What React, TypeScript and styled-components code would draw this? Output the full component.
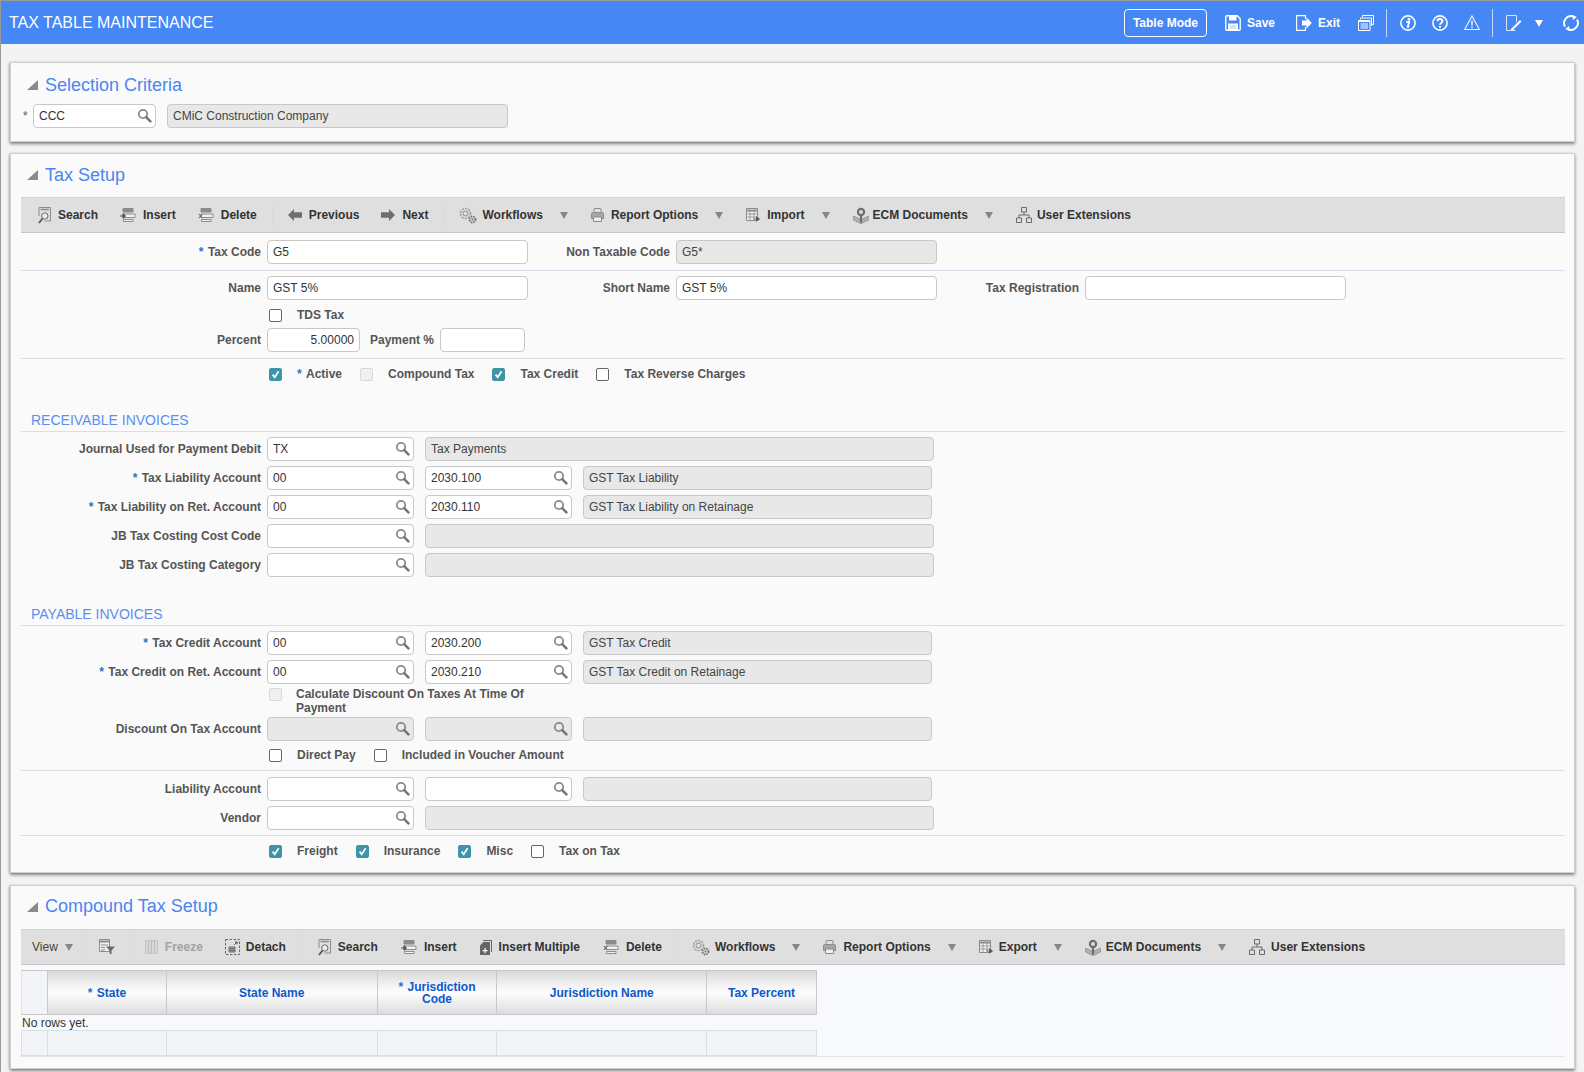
import React from 'react'
import styled, { createGlobalStyle } from 'styled-components'

const GlobalStyle = createGlobalStyle`
  html, body {
    margin: 0;
    padding: 0;
    height: 100%;
    background: #f1f3f5;
    font-family: "Liberation Sans", Arial, sans-serif;
    font-size: 12px;
    overflow: hidden;
  }
  * { box-sizing: border-box; }
`

const Page = styled.div`
  height: 1072px;
  border-left: 1px solid #9a9a9a;
  border-top: 1px solid #9a9a9a;
`

/* top bar */
const TopBar = styled.header`
  height: 43px;
  background: #4487f5;
  color: #fff;
  display: flex;
  align-items: center;
  padding-left: 8px;
`
const PageTitle = styled.h1`
  margin: 0;
  font-size: 16px;
  font-weight: 400;
  flex: 1;
`
const ModeButton = styled.button`
  width: 83px;
  height: 28px;
  border: 1px solid #fff;
  border-radius: 4px;
  background: transparent;
  color: #fff;
  font: bold 12px "Liberation Sans", Arial, sans-serif;
  padding: 0;
  margin-right: 18px;
`
const TopAction = styled.span<{ $mr?: number }>`
  display: flex;
  align-items: center;
  gap: 6px;
  font-weight: 700;
  font-size: 12px;
  margin-right: ${(p) => p.$mr ?? 16}px;
`
const TopSep = styled.span`
  width: 1px;
  height: 28px;
  background: #c6d9fb;
  margin: 0 13px 0 12px;
`

/* panels */
const Panel = styled.section<{ $mt: number; $pb?: number }>`
  margin: ${(p) => p.$mt}px 9px 0 9px;
  padding: 0 9px ${(p) => p.$pb ?? 11}px 10px;
  background: #fafafa;
  border: 1px solid #d0d0d0;
  box-shadow: 0 2px 3px rgba(0, 0, 0, 0.45), -1px 0 2px rgba(0, 0, 0, 0.12);
`
const PanelHead = styled.div<{ $h: number; $pb?: number }>`
  height: ${(p) => p.$h}px;
  display: flex;
  align-items: center;
  gap: 7px;
  padding: 0 0 ${(p) => p.$pb ?? 0}px 6px;
`
const Collapse = styled.span`
  width: 0;
  height: 0;
  border-style: solid;
  border-width: 0 0 10px 11px;
  border-color: transparent transparent #8a8a8a transparent;
`
const PanelTitle = styled.h2`
  margin: 0;
  font-size: 18px;
  font-weight: 400;
  color: #4a86f2;
`

/* toolbars */
const Toolbar = styled.div<{ $pl: number }>`
  height: 36px;
  display: flex;
  align-items: center;
  padding-left: ${(p) => p.$pl}px;
  background: #dfdfdf;
  border-top: 1px solid #cfd3d6;
  border-bottom: 1px solid #c6c6c6;
`
const ToolGroup = styled.div<{ $gap?: number }>`
  display: flex;
  align-items: center;
  gap: ${(p) => p.$gap ?? 22}px;
`
const ToolItem = styled.span<{ $off?: boolean }>`
  display: flex;
  align-items: center;
  font-weight: 700;
  white-space: nowrap;
  color: ${(p) => (p.$off ? '#a3a3a3' : '#333')};
`
const IconSlot = styled.span<{ $gap: number }>`
  display: flex;
  margin-right: ${(p) => p.$gap}px;
`
const ToolSep = styled.span<{ $mr?: number }>`
  width: 1px;
  height: 28px;
  background: #d6dde2;
  margin: 0 ${(p) => p.$mr ?? 15}px 0 15px;
`
const ViewSep = styled(ToolSep)`
  margin: 0 12px 0 13px;
`
const MenuCaret = styled.span<{ $ml?: number; $mr?: number }>`
  width: 0;
  height: 0;
  border-style: solid;
  border-width: 7px 4.5px 0 4.5px;
  border-color: #868686 transparent transparent transparent;
  margin-left: ${(p) => p.$ml ?? 17}px;
  margin-right: ${(p) => p.$mr ?? 1}px;
`
const ViewText = styled.span`
  color: #444;
`
const TopCaret = styled.span`
  width: 0;
  height: 0;
  border-style: solid;
  border-width: 7px 4.5px 0 4.5px;
  border-color: #fff transparent transparent transparent;
  margin: 2px 20px 0 0;
`

/* form */
const Row = styled.div<{ $mt?: number }>`
  display: flex;
  align-items: center;
  gap: 6px;
  min-height: 24px;
  margin-top: ${(p) => p.$mt ?? 5}px;
`
const FieldGroup = styled.div`
  display: flex;
  gap: 11px;
`
const Label = styled.label<{ $w: number }>`
  width: ${(p) => p.$w}px;
  text-align: right;
  font-weight: 700;
  color: #555;
  white-space: nowrap;
`
const Star = styled.span`
  color: #2c6fd4;
  margin-right: 1px;
`
const CriteriaRow = styled.div`
  display: flex;
  align-items: center;
  margin-top: -3px;
  padding-left: 2px;
`
const CriteriaStar = styled.span`
  color: #555;
  width: 10px;
`
const TextBox = styled.input<{ $w: number; $right?: boolean }>`
  width: ${(p) => p.$w}px;
  height: 24px;
  padding: 0 5px;
  border: 1px solid #c8c8c8;
  border-radius: 4px;
  background: #fff;
  color: #333;
  font: 12px "Liberation Sans", Arial, sans-serif;
  text-align: ${(p) => (p.$right ? 'right' : 'left')};
  outline: none;
`
const ReadBox = styled(TextBox)`
  background: #e8e8e8;
  color: #444;
`
const LovBox = styled.div<{ $w: number; $off?: boolean }>`
  width: ${(p) => p.$w}px;
  height: 24px;
  display: flex;
  align-items: center;
  padding: 0 3px 0 5px;
  border: 1px solid #c8c8c8;
  border-radius: 4px;
  background: ${(p) => (p.$off ? '#e8e8e8' : '#fff')};
  svg {
    margin-bottom: 1px;
  }
`
const LovInput = styled.input`
  flex: 1;
  min-width: 0;
  height: 20px;
  padding: 0;
  border: 0;
  background: transparent;
  color: #333;
  font: 12px "Liberation Sans", Arial, sans-serif;
  outline: none;
`
const Divider = styled.hr<{ $mt?: number }>`
  height: 1px;
  margin: ${(p) => p.$mt ?? 6}px 0 0;
  border: 0;
  background: #d6e0ea;
`
const CheckRow = styled.div<{ $mt?: number }>`
  display: flex;
  align-items: center;
  height: 20px;
  padding-left: 248px;
  margin-top: ${(p) => p.$mt ?? 5}px;
`
const CheckItem = styled.span`
  display: flex;
  align-items: center;
  gap: 15px;
  margin-right: 18px;
  font-weight: 700;
  color: #555;
  white-space: nowrap;
`
const Box = styled.span<{ $on?: boolean; $off?: boolean }>`
  width: 13px;
  height: 13px;
  flex: none;
  display: flex;
  border-radius: 2px;
  border: 1px solid ${(p) => (p.$on ? '#3d95a8' : p.$off ? '#d8d8d8' : '#666')};
  background: ${(p) => (p.$on ? '#3d95a8' : p.$off ? '#f0f0f0' : '#fff')};
`
const WrapCheck = styled.div`
  display: flex;
  gap: 14px;
  align-items: flex-start;
  padding-left: 248px;
  margin-top: 3px;
  font-weight: 700;
  color: #555;
  line-height: 14px;
`
const WrapText = styled.span`
  width: 240px;
`
const WrapBox = styled(Box)`
  margin-top: 1px;
`
const SubHead = styled.h3<{ $mt: number }>`
  height: 21px;
  margin: ${(p) => p.$mt}px 0 0;
  padding: 1px 0 0 10px;
  font-size: 14px;
  line-height: 16px;
  font-weight: 400;
  color: #5a8ff0;
  border-bottom: 1px solid #dcdfe2;
`

/* table */
const TableWrap = styled.div`
  height: 92px;
  padding-top: 5px;
  background: #f7f9fc;
  border-bottom: 1px solid #dde4ea;
`
const HeadRow = styled.div`
  display: flex;
  width: 796px;
  height: 45px;
  border: 1px solid #c9c9c9;
  border-width: 1px 1px 1px 0;
`
const HeadCell = styled.div<{ $w: number }>`
  width: ${(p) => p.$w}px;
  display: flex;
  align-items: center;
  justify-content: center;
  text-align: center;
  line-height: 12px;
  font-weight: 700;
  color: #0d57cf;
  border-left: 1px solid #c9c9c9;
  background: linear-gradient(#d9d9d9, #fbfbfb 45%, #fbfbfb 55%, #dcdcdc);
`
const HeadBlank = styled.div`
  width: 26px;
  background: #f2f4f8;
  border-left: 1px solid #dfe4e8;
`
const NoRows = styled.div`
  height: 15px;
  line-height: 16px;
  padding-left: 1px;
  color: #333;
`
const FootRow = styled.div`
  display: flex;
  width: 796px;
  height: 26px;
  background: #f2f4f8;
  border: 1px solid #d6e0ea;
  border-width: 1px 1px 1px 0;
`
const FootCell = styled.div<{ $w: number }>`
  width: ${(p) => p.$w}px;
  border-left: 1px solid #d6e0ea;
`

/* icons */
const G = '#6a6a6a'
const L = '#8c8c8c'
const WHITE = '#fff'

const LovIcon = () => (
  <svg width="15" height="15" viewBox="0 0 15 15" fill="none">
    <circle cx="6" cy="6" r="4.2" stroke="#8a8a8a" strokeWidth="1.8" />
    <path d="M9.2 9.2 13.4 13.4" stroke="#777" strokeWidth="2.6" strokeLinecap="round" />
  </svg>
)
const Tick = () => (
  <svg width="11" height="11" viewBox="0 0 11 11" fill="none">
    <path d="M2.6 5.6 4.7 8.2 8.6 2.2" stroke="#fff" strokeWidth="1.7" />
  </svg>
)

const SearchIcon = () => (
  <svg width="13" height="17" viewBox="0 0 13 17" fill="none">
    <path d="M1 .5h11.500v13.500H6.500M1 9V.5" stroke={L} />
    <path d="M2.500 2.500h8.500" stroke={L} strokeWidth="1.600" />
    <circle cx="6.800" cy="9" r="3.200" stroke={G} fill="#e8e8e8" />
    <path d="M4.500 11.500 1 16" stroke="#555" strokeWidth="1.800" />
  </svg>
)
const InsertIcon = ({ mark }: { mark: 'in' | 'x' }) => (
  <svg width="16" height="14" viewBox="0 0 16 14" fill="none">
    <path d="M3 .5h10v3.500H3z" fill="#8a8a8a" stroke={L} />
    <path d="M3 6h12v3.500H3z" stroke={L} fill="#f2f2f2" />
    <path d="M3.500 11.500h9.500v2H3.500z" stroke={L} fill="#f2f2f2" />
    {mark === 'in' ? (
      <path d="M0 8h4M3 5.600 5.600 8 3 10.400z" stroke="#555" fill="#555" />
    ) : (
      <path d="M.8 6 4.400 10M4.400 6 .8 10" stroke="#555" />
    )}
  </svg>
)
const ArrowLeftIcon = () => (
  <svg width="14" height="12" viewBox="0 0 14 12">
    <path d="M0 6 6 0v3.200h8v5.600H6V12z" fill="#6e6e6e" />
  </svg>
)
const ArrowRightIcon = () => (
  <svg width="14" height="12" viewBox="0 0 14 12">
    <path d="M14 6 8 0v3.200H0v5.600h8V12z" fill="#6e6e6e" />
  </svg>
)
const GearsIcon = () => (
  <svg width="18" height="17" viewBox="0 0 18 17" fill="none">
    <circle cx="6.500" cy="6.500" r="5" stroke="#a2a2a2" strokeWidth="1.600" strokeDasharray="2.200 1" />
    <circle cx="6.500" cy="6.500" r="2.500" stroke="#8c8c8c" />
    <circle cx="13.500" cy="12.500" r="3" stroke="#707070" strokeWidth="1.800" strokeDasharray="1.500 .9" />
    <circle cx="13.500" cy="12.500" r="1" fill="#707070" />
  </svg>
)
const PrinterIcon = () => (
  <svg width="13" height="14" viewBox="0 0 13 14" fill="none">
    <path d="M3 4.500V1a.5.5 0 0 1 .5-.5h6a.5.5 0 0 1 .5.5v3.500" stroke={L} />
    <path d="M.5 5.500a1 1 0 0 1 1-1h10a1 1 0 0 1 1 1V10.500H.5z" fill="#a6a6a6" stroke={L} />
    <path d="M2.500 9h8v4.500h-8z" fill="#eee" stroke={L} />
  </svg>
)
const SheetIcon = () => (
  <svg width="14" height="14" viewBox="0 0 14 14" fill="none">
    <path d="M.5.5h11v12H.5z" fill="#f2f2f2" stroke={L} />
    <path d="M.5 2.500h11" stroke={L} strokeWidth="2" />
    <path d="M.5 6h11M.5 9h11M4 3v9.500M8 3v9.500" stroke={L} strokeWidth=".8" />
    <path d="M7.500 11h4.500M10.500 8.800 13.500 11l-3 2.200z" stroke="#555" fill="#555" strokeWidth=".8" />
  </svg>
)
const EcmIcon = () => (
  <svg width="16" height="17" viewBox="0 0 16 17" fill="none">
    <path d="M.5 9 8 12.500 15.500 9v4L8 16.800.5 13z" fill="#b0b0b0" stroke={L} strokeWidth=".7" />
    <circle cx="8" cy="5" r="4.200" fill="#6e6e6e" />
    <circle cx="8" cy="5" r="2" fill="#dcdcdc" />
    <path d="M8 9v6.500" stroke="#6e6e6e" strokeWidth="2.200" />
  </svg>
)
const TreeIcon = () => (
  <svg width="16" height="16" viewBox="0 0 16 16" fill="none">
    <path d="M5.500.5h5v4.500h-5zM.5 11h5v4.500h-5zM10.500 11h5v4.500h-5z" stroke={G} />
    <path d="M8 5v3M3 11V8h10v3" stroke={G} />
  </svg>
)
const FilterIcon = () => (
  <svg width="16" height="16" viewBox="0 0 16 16" fill="none">
    <path d="M.5.5h10v12H.5z" stroke={L} fill="#f2f2f2" />
    <path d="M.5 2.500h10" stroke={L} strokeWidth="2" />
    <path d="M2 6h7M2 8.500h4M2 11h4" stroke={L} />
    <path d="M7 7.500h9l-3.500 4v4l-2-1v-3z" fill="#6a6a6a" />
  </svg>
)
const FreezeIcon = () => (
  <svg width="13" height="14" viewBox="0 0 13 14" fill="none">
    <path d="M.5.5h12v13H.5z" fill="#d8d8d8" stroke="#c4c4c4" />
    <path d="M3.500 1v12M6.500 1v12M9.500 1v12" stroke="#bcbcbc" />
  </svg>
)
const DetachIcon = () => (
  <svg width="15" height="16" viewBox="0 0 15 16" fill="none">
    <path d="M.5.500h14v15H.5z" stroke={G} strokeDasharray="2.500 1.500" />
    <path d="M4 8h6v5H4zM4 9.700h6M4 11.400h6M6 8v5M8 8v5" stroke="#555" strokeWidth=".8" />
    <path d="M9 6l3-3M10 3h2.200v2.200" stroke="#555" />
  </svg>
)
const MultiIcon = () => (
  <svg width="12" height="15" viewBox="0 0 12 15">
    <path d="M3 0h9v12h-1V1H3z" fill="#666" />
    <path d="M3.500 2H10v13H0V5.500z" fill="#666" />
    <path d="M4.500 8h1.200v2H7.500v1.200H5.700v2H4.500v-2H2.700V10h1.800z" fill="#fff" />
  </svg>
)

const SaveIcon = () => (
  <svg width="16" height="16" viewBox="0 0 16 16" fill="none">
    <path d="M1.800.8h10.500l2.900 2.900v10.500a1 1 0 0 1-1 1H1.800a1 1 0 0 1-1-1V1.800a1 1 0 0 1 1-1z" stroke={WHITE} strokeWidth="1.400" />
    <path d="M4 1h7.500v4.500H4z" fill={WHITE} />
    <path d="M3 8.500h10V15.500H3z" fill={WHITE} />
    <path d="M4.500 11h7M4.500 13h7" stroke="#a9c8fa" />
  </svg>
)
const ExitIcon = () => (
  <svg width="16" height="16" viewBox="0 0 16 16" fill="none">
    <path d="M9.500 4V.6H.6v14.800h8.900V12" stroke={WHITE} strokeWidth="1.200" />
    <path d="M6 5.500h4.500V2.500L15.800 8 10.500 13.500v-3H6z" fill={WHITE} />
  </svg>
)
const WindowsIcon = () => (
  <svg width="16" height="16" viewBox="0 0 16 16" fill="none">
    <path d="M4.500 2V.5h11v9H13" stroke={WHITE} />
    <path d="M2.500 4.500V3h11v8" stroke={WHITE} />
    <path d="M.5 5.500h11.500v10H.5z" stroke={WHITE} fill="#4487f5" />
    <path d="M.5 6.500h11.500M2.500 9h7.500M2.500 11h7.500M2.500 13h7.500" stroke={WHITE} />
  </svg>
)
const InfoIcon = () => (
  <svg width="16" height="16" viewBox="0 0 16 16" fill="none">
    <circle cx="8" cy="8" r="7.100" stroke={WHITE} strokeWidth="1.600" />
    <circle cx="9" cy="4.300" r="1.400" fill={WHITE} />
    <path d="M6.300 7h2.800l-1.300 4.800h1.400" stroke={WHITE} strokeWidth="1.900" />
  </svg>
)
const HelpIcon = () => (
  <svg width="16" height="16" viewBox="0 0 16 16" fill="none">
    <circle cx="8" cy="8" r="7.100" stroke={WHITE} strokeWidth="1.600" />
    <path d="M5.500 6.200C5.500 4.800 6.600 4 8 4s2.500.8 2.500 2.100c0 1.900-2.500 1.800-2.500 3.700" stroke={WHITE} strokeWidth="1.900" />
    <circle cx="8" cy="11.900" r="1.100" fill={WHITE} />
  </svg>
)
const WarnIcon = () => (
  <svg width="16" height="16" viewBox="0 0 16 16" fill="none">
    <path d="M8 1 15.300 14.500H.7z" stroke="#e6effe" strokeWidth="1.200" />
    <path d="M8 5.500v5" stroke="#d6e4fd" strokeWidth="1.700" />
    <circle cx="8" cy="12.200" r=".9" fill="#d6e4fd" />
  </svg>
)
const EditIcon = () => (
  <svg width="16" height="16" viewBox="0 0 16 16" fill="none">
    <path d="M10.500 7V.5H.5v15h9" stroke="#d6e4fd" />
    <path d="M5 14 14 5l1.500 1.500-9 9H5z" fill={WHITE} />
  </svg>
)
const RefreshIcon = () => (
  <svg width="16" height="16" viewBox="0 0 16 16" fill="none">
    <path d="M2 11.500A7 7 0 0 1 10.500 1.500" stroke={WHITE} strokeWidth="2" />
    <path d="M14 4.500A7 7 0 0 1 5.500 14.500" stroke={WHITE} strokeWidth="2" />
    <path d="M9.500 0 13.800 2 10 5zM6.500 16 2.200 14 6 11z" fill={WHITE} />
  </svg>
)

/* small pieces */
const Lov: React.FC<{ w: number; value?: string; off?: boolean }> = ({ w, value, off }) => (
  <LovBox $w={w} $off={off}>
    <LovInput defaultValue={value} readOnly />
    <LovIcon />
  </LovBox>
)
const Read: React.FC<{ w: number; value?: string }> = ({ w, value }) => (
  <ReadBox $w={w} defaultValue={value} readOnly />
)
const Text: React.FC<{ w: number; value?: string; right?: boolean }> = ({ w, value, right }) => (
  <TextBox $w={w} $right={right} defaultValue={value} readOnly />
)
const Req: React.FC<{ children: React.ReactNode }> = ({ children }) => (
  <span>
    <Star>* </Star>
    {children}
  </span>
)
const Check: React.FC<{ label: React.ReactNode; on?: boolean; off?: boolean }> = ({ label, on, off }) => (
  <CheckItem>
    <Box $on={on} $off={off}>{on && <Tick />}</Box>
    {label}
  </CheckItem>
)
const Tool: React.FC<{ icon: React.ReactNode; label: string; gap?: number; menu?: boolean; off?: boolean }> = ({
  icon,
  label,
  gap = 7,
  menu,
  off,
}) => (
  <ToolItem $off={off}>
    <IconSlot $gap={gap}>{icon}</IconSlot>
    {label}
    {menu && <MenuCaret />}
  </ToolItem>
)

const columns = [
  { id: 'state', w: 119, label: <Req>State</Req> },
  { id: 'stateName', w: 211, label: 'State Name' },
  { id: 'code', w: 120, label: <span><Star>* </Star>Jurisdiction<br />Code</span> },
  { id: 'jurName', w: 210, label: 'Jurisdiction Name' },
  { id: 'percent', w: 110, label: 'Tax Percent' },
]

const TaxSetup = () => (
  <Panel $mt={11}>
    <PanelHead $h={43} $pb={1}>
      <Collapse />
      <PanelTitle>Tax Setup</PanelTitle>
    </PanelHead>
    <Toolbar $pl={17}>
      <ToolGroup>
        <Tool icon={<SearchIcon />} label="Search" />
        <Tool icon={<InsertIcon mark="in" />} label="Insert" />
        <Tool icon={<InsertIcon mark="x" />} label="Delete" />
      </ToolGroup>
      <ToolSep />
      <ToolGroup>
        <Tool icon={<ArrowLeftIcon />} label="Previous" />
        <Tool icon={<ArrowRightIcon />} label="Next" />
      </ToolGroup>
      <ToolSep />
      <ToolGroup>
        <Tool icon={<GearsIcon />} label="Workflows" gap={5} menu />
        <Tool icon={<PrinterIcon />} label="Report Options" menu />
        <Tool icon={<SheetIcon />} label="Import" menu />
        <Tool icon={<EcmIcon />} label="ECM Documents" gap={4} menu />
        <Tool icon={<TreeIcon />} label="User Extensions" gap={5} />
      </ToolGroup>
    </Toolbar>

    <Row $mt={7}>
      <Label $w={240}><Req>Tax Code</Req></Label>
      <Text w={261} value="G5" />
      <Label $w={136}>Non Taxable Code</Label>
      <Read w={261} value="G5*" />
    </Row>
    <Divider />
    <Row>
      <Label $w={240}>Name</Label>
      <Text w={261} value="GST 5%" />
      <Label $w={136}>Short Name</Label>
      <Text w={261} value="GST 5%" />
      <Label $w={136}>Tax Registration</Label>
      <Text w={261} />
    </Row>
    <CheckRow>
      <Check label="TDS Tax" />
    </CheckRow>
    <Row $mt={3}>
      <Label $w={240}>Percent</Label>
      <Text w={93} value="5.00000" right />
      <Label $w={68}>Payment %</Label>
      <Text w={85} />
    </Row>
    <Divider />
    <CheckRow>
      <Check label={<Req>Active</Req>} on />
      <Check label="Compound Tax" off />
      <Check label="Tax Credit" on />
      <Check label="Tax Reverse Charges" />
    </CheckRow>

    <SubHead $mt={27}>RECEIVABLE INVOICES</SubHead>
    <Row>
      <Label $w={240}>Journal Used for Payment Debit</Label>
      <FieldGroup>
        <Lov w={147} value="TX" />
        <Read w={509} value="Tax Payments" />
      </FieldGroup>
    </Row>
    <Row>
      <Label $w={240}><Req>Tax Liability Account</Req></Label>
      <FieldGroup>
        <Lov w={147} value="00" />
        <Lov w={147} value="2030.100" />
        <Read w={349} value="GST Tax Liability" />
      </FieldGroup>
    </Row>
    <Row>
      <Label $w={240}><Req>Tax Liability on Ret. Account</Req></Label>
      <FieldGroup>
        <Lov w={147} value="00" />
        <Lov w={147} value="2030.110" />
        <Read w={349} value="GST Tax Liability on Retainage" />
      </FieldGroup>
    </Row>
    <Row>
      <Label $w={240}>JB Tax Costing Cost Code</Label>
      <FieldGroup>
        <Lov w={147} />
        <Read w={509} />
      </FieldGroup>
    </Row>
    <Row>
      <Label $w={240}>JB Tax Costing Category</Label>
      <FieldGroup>
        <Lov w={147} />
        <Read w={509} />
      </FieldGroup>
    </Row>

    <SubHead $mt={28}>PAYABLE INVOICES</SubHead>
    <Row>
      <Label $w={240}><Req>Tax Credit Account</Req></Label>
      <FieldGroup>
        <Lov w={147} value="00" />
        <Lov w={147} value="2030.200" />
        <Read w={349} value="GST Tax Credit" />
      </FieldGroup>
    </Row>
    <Row>
      <Label $w={240}><Req>Tax Credit on Ret. Account</Req></Label>
      <FieldGroup>
        <Lov w={147} value="00" />
        <Lov w={147} value="2030.210" />
        <Read w={349} value="GST Tax Credit on Retainage" />
      </FieldGroup>
    </Row>
    <WrapCheck>
      <WrapBox $off />
      <WrapText>Calculate Discount On Taxes At Time Of Payment</WrapText>
    </WrapCheck>
    <Row $mt={2}>
      <Label $w={240}>Discount On Tax Account</Label>
      <FieldGroup>
        <Lov w={147} off />
        <Lov w={147} off />
        <Read w={349} />
      </FieldGroup>
    </Row>
    <CheckRow $mt={4}>
      <Check label="Direct Pay" />
      <Check label="Included in Voucher Amount" />
    </CheckRow>
    <Divider $mt={5} />
    <Row $mt={6}>
      <Label $w={240}>Liability Account</Label>
      <FieldGroup>
        <Lov w={147} />
        <Lov w={147} />
        <Read w={349} />
      </FieldGroup>
    </Row>
    <Row>
      <Label $w={240}>Vendor</Label>
      <FieldGroup>
        <Lov w={147} />
        <Read w={509} />
      </FieldGroup>
    </Row>
    <Divider $mt={5} />
    <CheckRow>
      <Check label="Freight" on />
      <Check label="Insurance" on />
      <Check label="Misc" on />
      <Check label="Tax on Tax" />
    </CheckRow>
  </Panel>
)

const CompoundSetup = () => (
  <Panel $mt={12}>
    <PanelHead $h={43} $pb={2}>
      <Collapse />
      <PanelTitle>Compound Tax Setup</PanelTitle>
    </PanelHead>
    <Toolbar $pl={11}>
      <ViewText>View</ViewText>
      <MenuCaret $ml={7} $mr={0} />
      <ViewSep />
      <FilterIcon />
      <ToolSep $mr={14} />
      <ToolGroup>
        <Tool icon={<FreezeIcon />} label="Freeze" off />
        <Tool icon={<DetachIcon />} label="Detach" gap={6} />
      </ToolGroup>
      <ToolSep $mr={16} />
      <ToolGroup $gap={23}>
        <Tool icon={<SearchIcon />} label="Search" />
        <Tool icon={<InsertIcon mark="in" />} label="Insert" />
        <Tool icon={<MultiIcon />} label="Insert Multiple" />
        <Tool icon={<InsertIcon mark="x" />} label="Delete" />
      </ToolGroup>
      <ToolSep $mr={14} />
      <ToolGroup>
        <Tool icon={<GearsIcon />} label="Workflows" gap={5} menu />
        <Tool icon={<PrinterIcon />} label="Report Options" menu />
        <Tool icon={<SheetIcon />} label="Export" gap={6} menu />
        <Tool icon={<EcmIcon />} label="ECM Documents" gap={5} menu />
        <Tool icon={<TreeIcon />} label="User Extensions" gap={6} />
      </ToolGroup>
    </Toolbar>
    <TableWrap>
      <HeadRow>
        <HeadBlank />
        {columns.map((c) => (
          <HeadCell key={c.id} $w={c.w}>{c.label}</HeadCell>
        ))}
      </HeadRow>
      <NoRows>No rows yet.</NoRows>
      <FootRow>
        <FootCell $w={26} />
        {columns.map((c) => (
          <FootCell key={c.id} $w={c.w} />
        ))}
      </FootRow>
    </TableWrap>
  </Panel>
)

export default function App() {
  return (
    <Page>
      <GlobalStyle />
      <TopBar>
        <PageTitle>TAX TABLE MAINTENANCE</PageTitle>
        <ModeButton>Table Mode</ModeButton>
        <TopAction $mr={21}><SaveIcon />Save</TopAction>
        <TopAction $mr={18}><ExitIcon />Exit</TopAction>
        <TopAction $mr={0}><WindowsIcon /></TopAction>
        <TopSep />
        <TopAction><InfoIcon /></TopAction>
        <TopAction><HelpIcon /></TopAction>
        <TopAction $mr={0}><WarnIcon /></TopAction>
        <TopSep />
        <TopAction $mr={13}><EditIcon /></TopAction>
        <TopCaret />
        <TopAction $mr={5}><RefreshIcon /></TopAction>
      </TopBar>
      <Panel $mt={18} $pb={13}>
        <PanelHead $h={44}>
          <Collapse />
          <PanelTitle>Selection Criteria</PanelTitle>
        </PanelHead>
        <CriteriaRow>
          <CriteriaStar>*</CriteriaStar>
          <FieldGroup>
            <Lov w={123} value="CCC" />
            <Read w={341} value="CMiC Construction Company" />
          </FieldGroup>
        </CriteriaRow>
      </Panel>
      <TaxSetup />
      <CompoundSetup />
    </Page>
  )
}
